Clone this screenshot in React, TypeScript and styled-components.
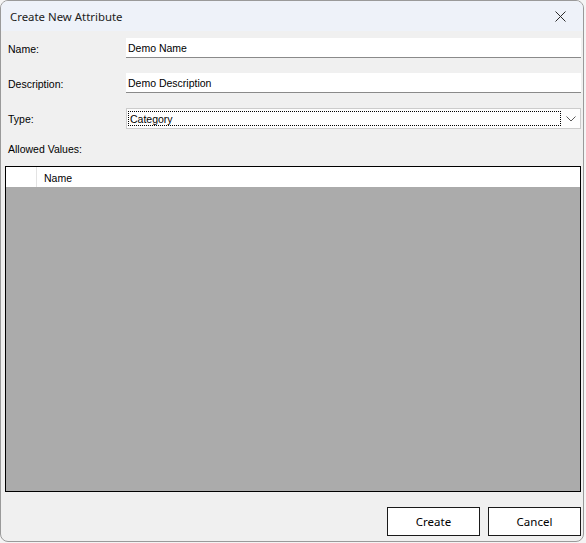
import React from 'react';
import styled, { createGlobalStyle } from 'styled-components';

const GlobalStyle = createGlobalStyle`
  html, body {
    margin: 0;
    padding: 0;
    background: #f4f4f4;
  }
  * {
    box-sizing: border-box;
  }
`;

// Dialog frame
const DialogWindow = styled.div`
  width: 584px;
  height: 542px;
  border: 1px solid #9a9a9a;
  border-radius: 8px;
  overflow: hidden;
  background: #f0f0f0;
  display: flex;
  flex-direction: column;
  font-family: "Liberation Sans", Arial, sans-serif;
  font-size: 10.5px;
  color: #000;
`;

const TitleBar = styled.div`
  height: 30px;
  flex: none;
  display: flex;
  align-items: center;
  justify-content: space-between;
  background: #eef2f9;
  padding-left: 9px;
`;

const TitleText = styled.span`
  font-family: "Noto Sans", "Open Sans", sans-serif;
  font-size: 11.4px;
  color: #1b1b1b;
`;

const CloseButton = styled.button`
  width: 44px;
  height: 30px;
  border: none;
  background: transparent;
  display: flex;
  align-items: center;
  justify-content: center;
  padding: 0;
  margin-right: 1px;
`;

const Body = styled.div`
  flex: 1;
  display: flex;
  flex-direction: column;
  padding: 7px 2px 5px 4px;
`;

const FieldRow = styled.div<{ $h?: number }>`
  display: flex;
  align-items: center;
  height: ${p => p.$h ?? 20}px;
  margin-bottom: 15px;
`;

const Label = styled.label`
  width: 121px;
  padding-left: 3px;
  padding-top: 1px;
  flex: none;
`;

const TextBox = styled.div`
  flex: 1;
  height: 20px;
  background: #fff;
  border-bottom: 1px solid #8a8a8a;
  display: flex;
  align-items: center;
  padding-left: 2px;
  padding-top: 1px;
`;

const ComboBox = styled.div`
  flex: 1;
  height: 21px;
  background: #fdfdfd;
  border: 1px solid #cccccc;
  display: flex;
  align-items: center;
  padding: 2px 0 2px 1px;
`;

const FocusBox = styled.div`
  flex: 1;
  height: 100%;
  border: 1px dotted #000;
  display: flex;
  align-items: center;
  padding-left: 1px;
`;

const Chevron = styled.div`
  width: 19px;
  display: flex;
  align-items: center;
  justify-content: center;
`;

const SectionLabel = styled.div`
  margin-top: -2px;
  height: 14px;
  line-height: 14px;
  padding-left: 3px;
  margin-bottom: 10px;
`;

// Data grid
const Grid = styled.div`
  flex: 1;
  border: 1px solid #000;
  background: #ababab;
  display: flex;
  flex-direction: column;
`;

const GridHeader = styled.div`
  height: 20px;
  background: #fff;
  display: flex;
`;

const RowHeaderCell = styled.div`
  width: 31px;
  border-right: 1px solid #e3e3e3;
`;

const HeaderCell = styled.div`
  padding-left: 7px;
  padding-top: 1px;
  display: flex;
  align-items: center;
`;

const ButtonBar = styled.div`
  margin-top: 15px;
  display: flex;
  justify-content: flex-end;
  gap: 8px;
`;

const DialogButton = styled.button`
  width: 93px;
  height: 29px;
  background: #fff;
  border: 1px solid #1a1a1a;
  font-family: "Noto Sans", "Open Sans", sans-serif;
  font-size: 11.5px;
  color: #000;
  padding: 0;
`;

const App: React.FC = () => {
  return (
    <>
      <GlobalStyle />
      <DialogWindow>
        <TitleBar>
          <TitleText>Create New Attribute</TitleText>
          <CloseButton aria-label="Close">
            <svg width="11" height="11" viewBox="0 0 11 11">
              <path d="M0.5 0.5 L10.5 10.5 M10.5 0.5 L0.5 10.5" stroke="#2a2a2a" strokeWidth="1" />
            </svg>
          </CloseButton>
        </TitleBar>
        <Body>
          <FieldRow>
            <Label>Name:</Label>
            <TextBox>Demo Name</TextBox>
          </FieldRow>
          <FieldRow>
            <Label>Description:</Label>
            <TextBox>Demo Description</TextBox>
          </FieldRow>
          <FieldRow $h={21}>
            <Label>Type:</Label>
            <ComboBox>
              <FocusBox>Category</FocusBox>
              <Chevron>
                <svg width="10" height="6" viewBox="0 0 10 6">
                  <path d="M0.5 0.5 L5 5 L9.5 0.5" stroke="#5a5a5a" strokeWidth="1" fill="none" />
                </svg>
              </Chevron>
            </ComboBox>
          </FieldRow>
          <SectionLabel>Allowed Values:</SectionLabel>
          <Grid>
            <GridHeader>
              <RowHeaderCell />
              <HeaderCell>Name</HeaderCell>
            </GridHeader>
          </Grid>
          <ButtonBar>
            <DialogButton>Create</DialogButton>
            <DialogButton>Cancel</DialogButton>
          </ButtonBar>
        </Body>
      </DialogWindow>
    </>
  );
};

export default App;
